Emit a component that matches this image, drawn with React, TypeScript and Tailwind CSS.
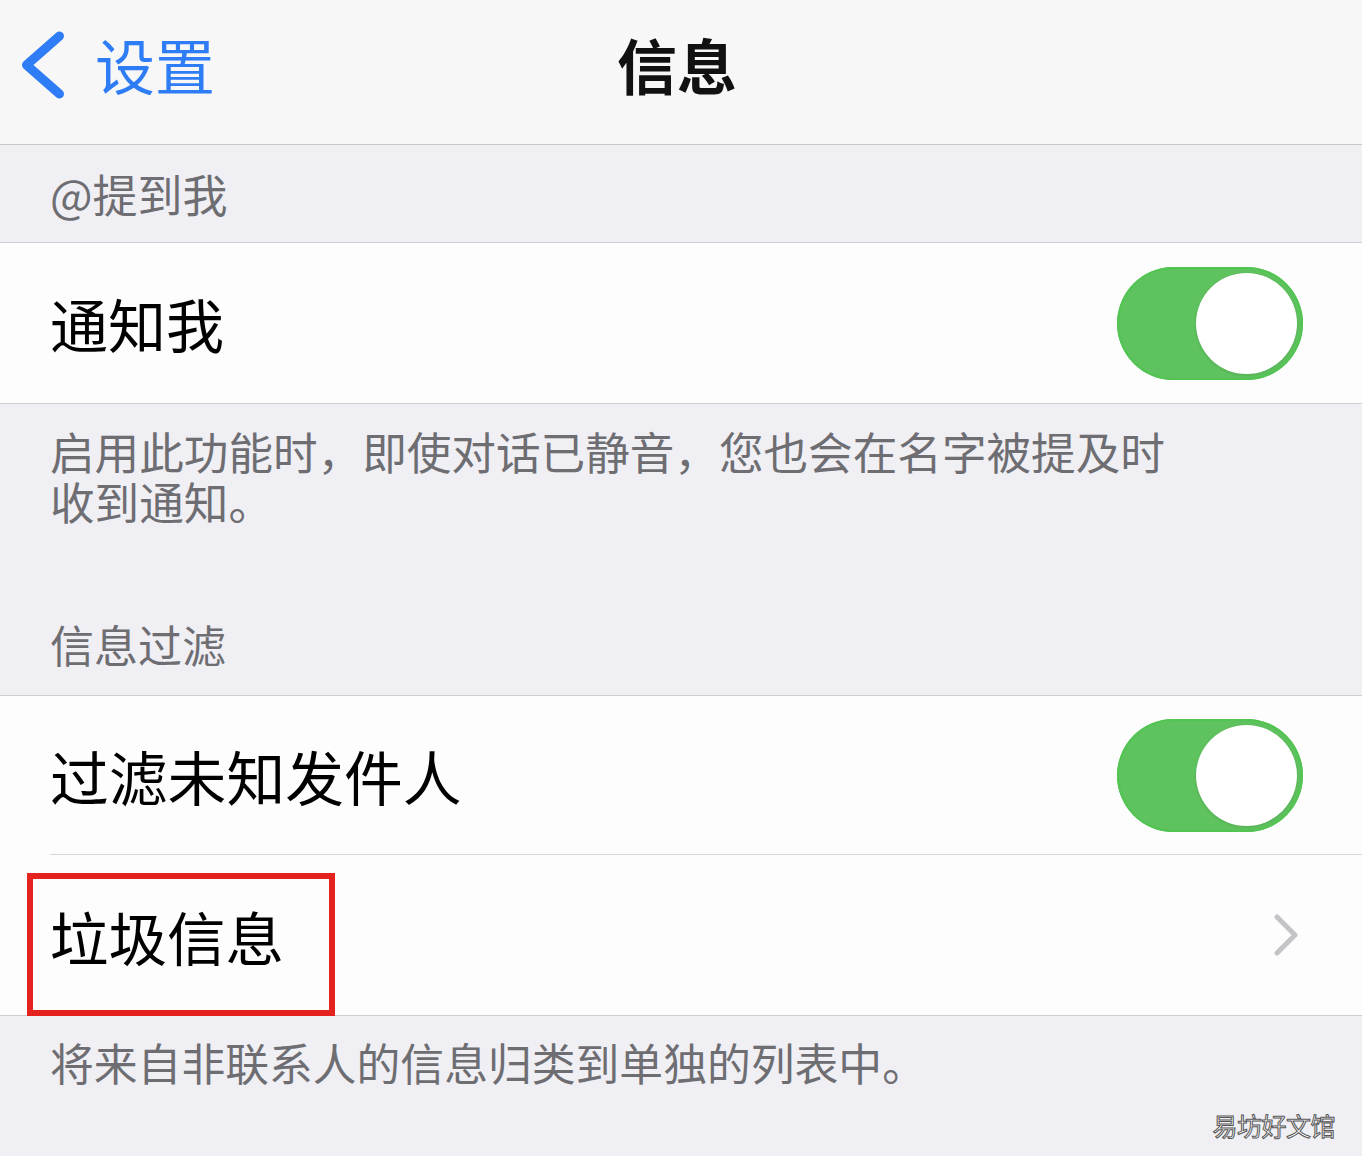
import React from "react";

function Toggle() {
  return (
    <div className="relative w-[186px] h-[113px] rounded-full bg-[#5ec25e] shadow-[inset_0_0_0_2px_#52c452]">
      <div className="absolute right-[6px] top-[6px] w-[101px] h-[101px] rounded-full bg-white shadow-[0_1px_3px_rgba(0,0,0,0.12)]" />
    </div>
  );
}

export default function App() {
  return (
    <div className="w-[1362px] h-[1156px] overflow-hidden bg-[#efeff4] font-['Noto_Sans_CJK_SC','Noto_Sans',sans-serif] relative">
      {/* Nav bar */}
      <div className="h-[145px] bg-[#f7f7f7] border-b border-[#c6c6ca] pt-[26px]">
        <div className="grid grid-cols-[1fr_auto_1fr] h-[72px] items-center">
          <div className="flex items-center pl-[20px]">
            <svg width="48" height="72" viewBox="0 0 48 72" fill="none" className="mt-[3px]">
              <polyline
                points="39.5,7 6.5,36 39.5,65"
                stroke="#2e7cf6"
                strokeWidth="9"
                strokeLinecap="round"
                strokeLinejoin="round"
              />
            </svg>
            <span className="ml-[27px] text-[60px] leading-[60px] text-[#2e7cf6]">设置</span>
          </div>
          <div className="text-[60px] leading-[60px] font-bold text-[#111] -ml-[8px]">信息</div>
          <div />
        </div>
      </div>

      {/* @提到我 header */}
      <div className="h-[98px] flex items-center pl-[50px] border-b border-[#cdcdd2]">
        <span className="text-[45px] leading-[44px] text-[#6d6d72]">@提到我</span>
      </div>

      {/* 通知我 row */}
      <div className="h-[161px] bg-[#fdfdfe] border-b border-[#cdcdd2] flex items-center justify-between pl-[50px] pr-[59px]">
        <span className="text-[58px] leading-[58px] text-black">通知我</span>
        <Toggle />
      </div>

      {/* footer + header */}
      <div className="h-[292px] border-b border-[#cdcdd2] pl-[50px] pt-[22px]">
        <p className="text-[44.6px] leading-[50px] text-[#6d6d72] w-[1150px]">
          启用此功能时，即使对话已静音，您也会在名字被提及时收到通知。
        </p>
        <div className="mt-[96px] text-[44px] leading-[44px] text-[#6d6d72]">信息过滤</div>
      </div>

      {/* Rows group */}
      <div className="bg-[#fdfdfe] border-b border-[#cdcdd2]">
        <div className="h-[159px] flex items-center justify-between pr-[59px] pl-[50px] relative">
          <span className="text-[58.8px] leading-[58px] text-black">过滤未知发件人</span>
          <Toggle />
          <div className="absolute left-[50px] right-0 bottom-0 h-px bg-[#d8d8dc]" />
        </div>
        <div className="h-[160px] flex items-center justify-between pl-[50px] pr-[64px] relative">
          <span className="text-[58.5px] leading-[58px] text-black mt-[2px]">垃圾信息</span>
          <svg width="24" height="42" viewBox="0 0 24 42" fill="none">
            <polyline
              points="3,3 21,21 3,39"
              stroke="#c4c4c8"
              strokeWidth="5"
              strokeLinecap="round"
              strokeLinejoin="round"
            />
          </svg>
          <div className="absolute left-[27px] top-[18px] w-[308px] h-[143px] border-[6px] border-[#e4221e]" />
        </div>
      </div>

      {/* bottom footer */}
      <div className="pl-[50px] pt-[24px]">
        <p className="text-[43.8px] leading-[44px] text-[#6d6d72]">将来自非联系人的信息归类到单独的列表中。</p>
      </div>

      {/* watermark */}
      <div className="absolute right-[27px] bottom-[16px] text-[25px] leading-[30px] text-white [-webkit-text-stroke:1px_#555] tracking-[-0.5px]">
        易坊好文馆
      </div>
    </div>
  );
}
